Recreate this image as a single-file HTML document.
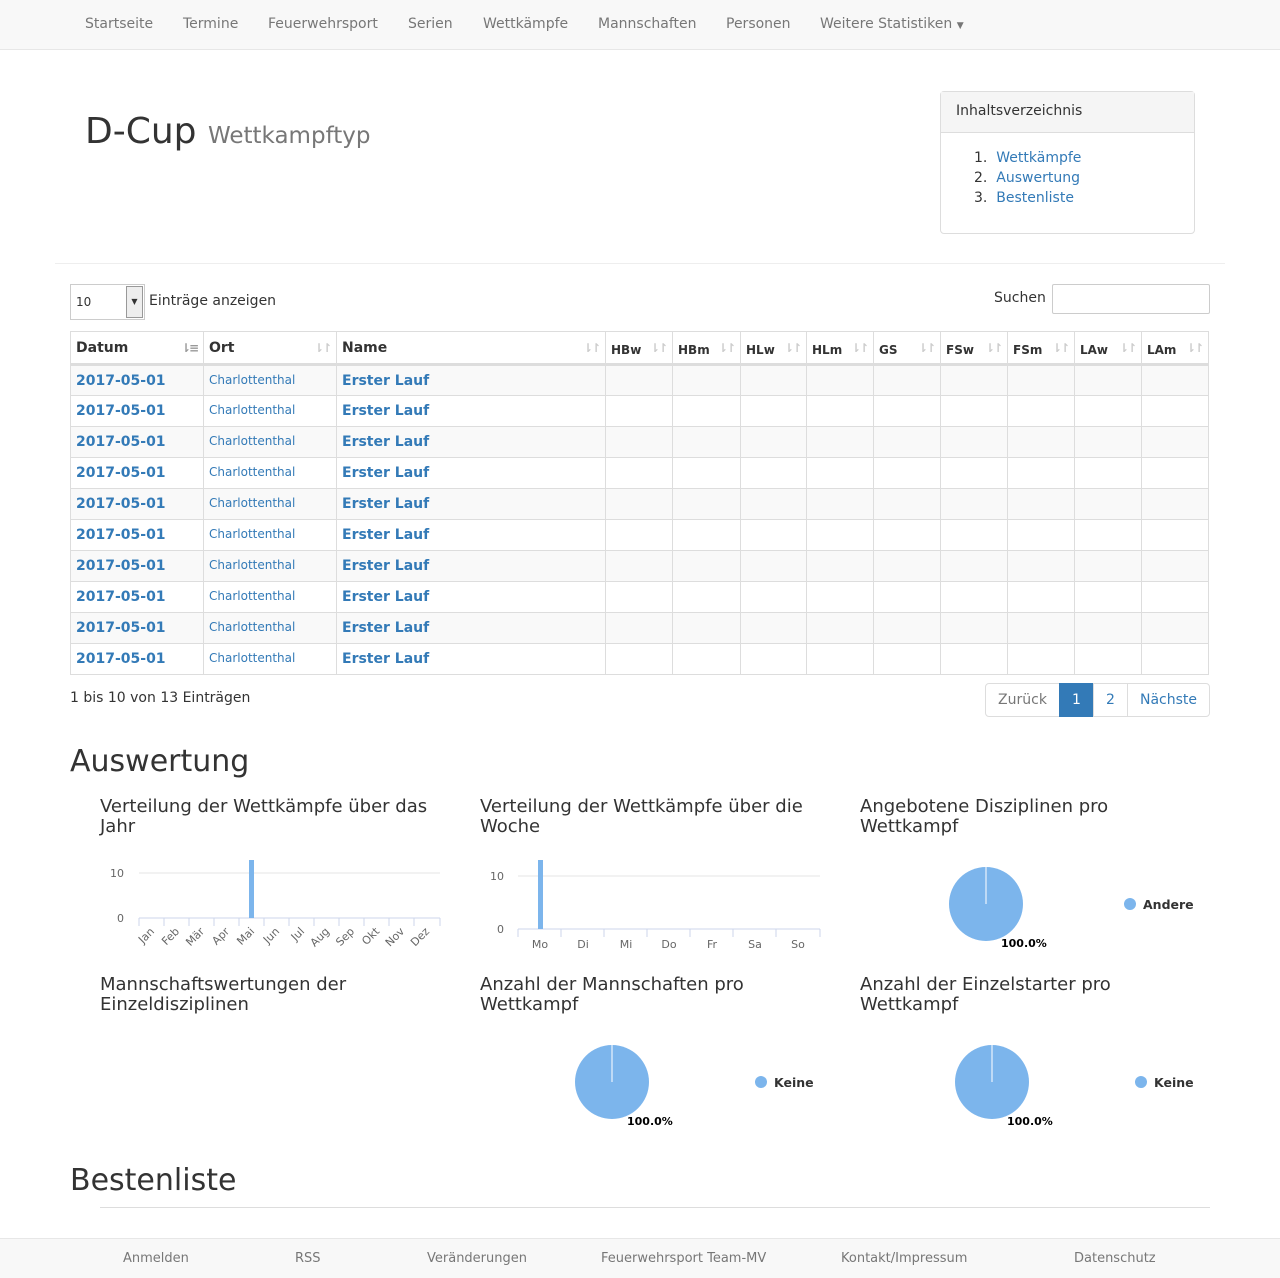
<!DOCTYPE html>
<html><head><meta charset="utf-8"><style>
*{box-sizing:border-box;margin:0;padding:0}
body{width:1280px;height:1278px;position:relative;font-family:"DejaVu Sans","Liberation Sans",sans-serif;font-size:14px;color:#333;background:#fff;overflow:hidden}
.a{position:absolute}
a{color:#337ab7;text-decoration:none}
.nav{left:0;top:0;width:1280px;height:50px;background:#f8f8f8;border-bottom:1px solid #e7e7e7}
.nav span{position:absolute;top:16px;color:#777;font-size:14px}
table{border-collapse:collapse;table-layout:fixed}
td,th{border:1px solid #ddd;height:31px;padding:0 5px;text-align:left;white-space:nowrap;overflow:hidden}
th{height:33px;border-bottom:3px solid #ddd;position:relative;font-size:14px}
th.s{font-size:12px;padding-top:4px}
th i{position:absolute;right:6px;top:9px;color:#ccc;font-style:normal;font-size:12px;letter-spacing:-2px}
tr:nth-child(odd) td{background:#f9f9f9}
td.d a,td.n a{font-weight:bold;font-size:14px}
td.o a{font-size:12px;position:relative;top:-1px}
.h4{font-size:18px;line-height:20px}
.pg{top:683px;height:34px;border:1px solid #ddd;line-height:32px;text-align:center;font-size:14px}
.foot span{position:absolute;top:12px;color:#777;font-size:13px}
svg text{font-family:"DejaVu Sans",sans-serif}
</style></head><body>
<div class="a nav">
<span style="left:85px">Startseite</span><span style="left:183px">Termine</span><span style="left:268px">Feuerwehrsport</span><span style="left:408px">Serien</span><span style="left:483px">Wettkämpfe</span><span style="left:598px">Mannschaften</span><span style="left:726px">Personen</span><span style="left:820px">Weitere Statistiken <small style="font-size:9px">▼</small></span>
</div>
<div class="a" style="left:85px;top:110px;font-size:36px;line-height:44px">D-Cup <span style="font-size:23px;color:#777">Wettkampftyp</span></div>
<div class="a" style="left:940px;top:91px;width:255px;height:143px;border:1px solid #ddd;border-radius:4px">
<div style="height:41px;background:#f5f5f5;border-bottom:1px solid #ddd;padding:11px 15px 0;font-size:14px">Inhaltsverzeichnis</div>
<div style="padding:15px 0 0 33px;line-height:20px">1.&nbsp;&nbsp;<a>Wettkämpfe</a><br>2.&nbsp;&nbsp;<a>Auswertung</a><br>3.&nbsp;&nbsp;<a>Bestenliste</a></div>
</div>
<div class="a" style="left:55px;top:263px;width:1170px;border-top:1px solid #eee"></div>
<div class="a" style="left:70px;top:284px;width:75px;height:36px;border:1px solid #ccc;font-size:12px;padding:10px 5px">10<div class="a" style="right:1px;top:1px;width:17px;height:32px;background:#eee;border:1px solid #999;font-size:8px;text-align:center;line-height:30px">▼</div></div>
<div class="a" style="left:149px;top:293px">Einträge anzeigen</div>
<div class="a" style="left:994px;top:290px">Suchen</div>
<div class="a" style="left:1052px;top:284px;width:158px;height:30px;border:1px solid #ccc;border-radius:2px"></div>
<table class="a" style="left:70px;top:331px;width:1140px">
<colgroup><col style="width:133px"><col style="width:133px"><col style="width:269px"><col style="width:67px"><col style="width:68px"><col style="width:66px"><col style="width:67px"><col style="width:67px"><col style="width:67px"><col style="width:67px"><col style="width:67px"><col style="width:67px"><col style="width:69px"></colgroup>
<tr><th>Datum<i style="color:#999">⇂≡</i></th><th>Ort<i>⇂↾</i></th><th>Name<i>⇂↾</i></th><th class="s">HBw<i>⇂↾</i></th><th class="s">HBm<i>⇂↾</i></th><th class="s">HLw<i>⇂↾</i></th><th class="s">HLm<i>⇂↾</i></th><th class="s">GS<i>⇂↾</i></th><th class="s">FSw<i>⇂↾</i></th><th class="s">FSm<i>⇂↾</i></th><th class="s">LAw<i>⇂↾</i></th><th class="s">LAm<i>⇂↾</i></th></tr>
<tbody>
<tr><td class="d"><a>2017-05-01</a></td><td class="o"><a>Charlottenthal</a></td><td class="n"><a>Erster Lauf</a></td><td></td><td></td><td></td><td></td><td></td><td></td><td></td><td></td><td></td></tr>
<tr><td class="d"><a>2017-05-01</a></td><td class="o"><a>Charlottenthal</a></td><td class="n"><a>Erster Lauf</a></td><td></td><td></td><td></td><td></td><td></td><td></td><td></td><td></td><td></td></tr>
<tr><td class="d"><a>2017-05-01</a></td><td class="o"><a>Charlottenthal</a></td><td class="n"><a>Erster Lauf</a></td><td></td><td></td><td></td><td></td><td></td><td></td><td></td><td></td><td></td></tr>
<tr><td class="d"><a>2017-05-01</a></td><td class="o"><a>Charlottenthal</a></td><td class="n"><a>Erster Lauf</a></td><td></td><td></td><td></td><td></td><td></td><td></td><td></td><td></td><td></td></tr>
<tr><td class="d"><a>2017-05-01</a></td><td class="o"><a>Charlottenthal</a></td><td class="n"><a>Erster Lauf</a></td><td></td><td></td><td></td><td></td><td></td><td></td><td></td><td></td><td></td></tr>
<tr><td class="d"><a>2017-05-01</a></td><td class="o"><a>Charlottenthal</a></td><td class="n"><a>Erster Lauf</a></td><td></td><td></td><td></td><td></td><td></td><td></td><td></td><td></td><td></td></tr>
<tr><td class="d"><a>2017-05-01</a></td><td class="o"><a>Charlottenthal</a></td><td class="n"><a>Erster Lauf</a></td><td></td><td></td><td></td><td></td><td></td><td></td><td></td><td></td><td></td></tr>
<tr><td class="d"><a>2017-05-01</a></td><td class="o"><a>Charlottenthal</a></td><td class="n"><a>Erster Lauf</a></td><td></td><td></td><td></td><td></td><td></td><td></td><td></td><td></td><td></td></tr>
<tr><td class="d"><a>2017-05-01</a></td><td class="o"><a>Charlottenthal</a></td><td class="n"><a>Erster Lauf</a></td><td></td><td></td><td></td><td></td><td></td><td></td><td></td><td></td><td></td></tr>
<tr><td class="d"><a>2017-05-01</a></td><td class="o"><a>Charlottenthal</a></td><td class="n"><a>Erster Lauf</a></td><td></td><td></td><td></td><td></td><td></td><td></td><td></td><td></td><td></td></tr>
</tbody></table>
<div class="a" style="left:70px;top:690px">1 bis 10 von 13 Einträgen</div>
<div class="a pg" style="left:985px;width:75px;color:#777;border-radius:4px 0 0 4px">Zurück</div>
<div class="a pg" style="left:1059px;width:35px;background:#337ab7;border-color:#337ab7;color:#fff">1</div>
<div class="a pg" style="left:1093px;width:35px;color:#337ab7">2</div>
<div class="a pg" style="left:1127px;width:83px;color:#337ab7;border-radius:0 4px 4px 0">Nächste</div>
<div class="a" style="left:70px;top:743px;font-size:30px;line-height:38px">Auswertung</div>
<div class="a h4" style="left:100px;top:797px">Verteilung der Wettkämpfe über das<br>Jahr</div>
<div class="a h4" style="left:480px;top:797px">Verteilung der Wettkämpfe über die<br>Woche</div>
<div class="a h4" style="left:860px;top:797px">Angebotene Disziplinen pro<br>Wettkampf</div>
<div class="a h4" style="left:100px;top:975px">Mannschaftswertungen der<br>Einzeldisziplinen</div>
<div class="a h4" style="left:480px;top:975px">Anzahl der Mannschaften pro<br>Wettkampf</div>
<div class="a h4" style="left:860px;top:975px">Anzahl der Einzelstarter pro<br>Wettkampf</div>
<svg class="a" style="left:0;top:0" width="1280" height="1278">
<g font-size="11" fill="#666">
<line x1="139" y1="873" x2="440" y2="873" stroke="#e6e6e6"/>
<line x1="139" y1="918" x2="440" y2="918" stroke="#ccd6eb"/>
<text x="124" y="877" text-anchor="end">10</text><text x="124" y="922" text-anchor="end">0</text>
<rect x="249" y="860" width="5" height="58" fill="#7cb5ec"/>
<g stroke="#ccd6eb">
<line x1="139" y1="918" x2="139" y2="926"/><line x1="164" y1="918" x2="164" y2="926"/><line x1="189" y1="918" x2="189" y2="926"/><line x1="214" y1="918" x2="214" y2="926"/><line x1="239" y1="918" x2="239" y2="926"/><line x1="264" y1="918" x2="264" y2="926"/><line x1="289" y1="918" x2="289" y2="926"/><line x1="314" y1="918" x2="314" y2="926"/><line x1="339" y1="918" x2="339" y2="926"/><line x1="364" y1="918" x2="364" y2="926"/><line x1="389" y1="918" x2="389" y2="926"/><line x1="414" y1="918" x2="414" y2="926"/><line x1="440" y1="918" x2="440" y2="926"/></g>
<text transform="translate(155,932) rotate(-45)" text-anchor="end">Jan</text>
<text transform="translate(180,932) rotate(-45)" text-anchor="end">Feb</text>
<text transform="translate(205,932) rotate(-45)" text-anchor="end">Mär</text>
<text transform="translate(230,932) rotate(-45)" text-anchor="end">Apr</text>
<text transform="translate(255,932) rotate(-45)" text-anchor="end">Mai</text>
<text transform="translate(280,932) rotate(-45)" text-anchor="end">Jun</text>
<text transform="translate(305,932) rotate(-45)" text-anchor="end">Jul</text>
<text transform="translate(330,932) rotate(-45)" text-anchor="end">Aug</text>
<text transform="translate(355,932) rotate(-45)" text-anchor="end">Sep</text>
<text transform="translate(380,932) rotate(-45)" text-anchor="end">Okt</text>
<text transform="translate(405,932) rotate(-45)" text-anchor="end">Nov</text>
<text transform="translate(430,932) rotate(-45)" text-anchor="end">Dez</text>
<line x1="518" y1="876" x2="820" y2="876" stroke="#e6e6e6"/>
<line x1="518" y1="929" x2="820" y2="929" stroke="#ccd6eb"/>
<text x="504" y="880" text-anchor="end">10</text><text x="504" y="933" text-anchor="end">0</text>
<rect x="538" y="860" width="5" height="69" fill="#7cb5ec"/>
<g stroke="#ccd6eb"><line x1="518" y1="929" x2="518" y2="937"/><line x1="561" y1="929" x2="561" y2="937"/><line x1="604" y1="929" x2="604" y2="937"/><line x1="647" y1="929" x2="647" y2="937"/><line x1="690" y1="929" x2="690" y2="937"/><line x1="733" y1="929" x2="733" y2="937"/><line x1="776" y1="929" x2="776" y2="937"/><line x1="820" y1="929" x2="820" y2="937"/></g>
<g text-anchor="middle"><text x="540" y="948">Mo</text><text x="583" y="948">Di</text><text x="626" y="948">Mi</text><text x="669" y="948">Do</text><text x="712" y="948">Fr</text><text x="755" y="948">Sa</text><text x="798" y="948">So</text></g>
</g>
<g font-size="11" font-weight="bold" fill="#000">
<circle cx="986" cy="904" r="37" fill="#7cb5ec"/><line x1="986" y1="867" x2="986" y2="904" stroke="#fff"/>
<text x="1001" y="947">100.0%</text>
<circle cx="1130" cy="904" r="6" fill="#7cb5ec"/><text x="1143" y="909" font-size="12.5" fill="#333">Andere</text>
<circle cx="612" cy="1082" r="37" fill="#7cb5ec"/><line x1="612" y1="1045" x2="612" y2="1082" stroke="#fff"/>
<text x="627" y="1125">100.0%</text>
<circle cx="761" cy="1082" r="6" fill="#7cb5ec"/><text x="774" y="1087" font-size="12.5" fill="#333">Keine</text>
<circle cx="992" cy="1082" r="37" fill="#7cb5ec"/><line x1="992" y1="1045" x2="992" y2="1082" stroke="#fff"/>
<text x="1007" y="1125">100.0%</text>
<circle cx="1141" cy="1082" r="6" fill="#7cb5ec"/><text x="1154" y="1087" font-size="12.5" fill="#333">Keine</text>
</g>
</svg>
<div class="a" style="left:70px;top:1162px;font-size:30px;line-height:38px">Bestenliste</div>
<div class="a" style="left:100px;top:1207px;width:1110px;border-top:1px solid #ddd"></div>
<div class="a foot" style="left:0;top:1238px;width:1280px;height:40px;background:#f8f8f8;border-top:1px solid #e7e7e7">
<span style="left:123px">Anmelden</span><span style="left:295px">RSS</span><span style="left:427px">Veränderungen</span><span style="left:601px">Feuerwehrsport Team-MV</span><span style="left:841px">Kontakt/Impressum</span><span style="left:1074px">Datenschutz</span>
</div>
</body></html>
